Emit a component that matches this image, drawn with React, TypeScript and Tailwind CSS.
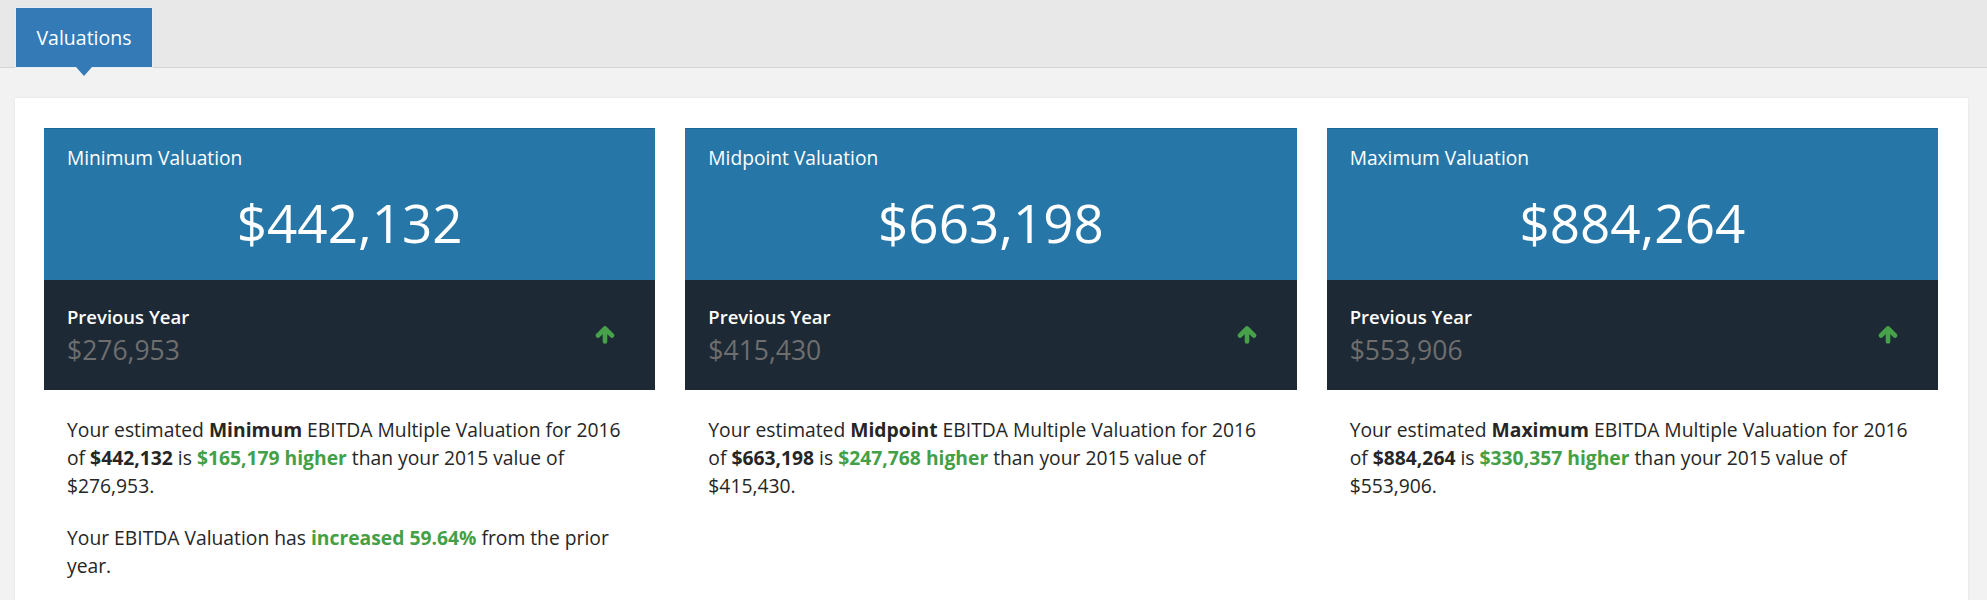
const cards = [
  {
    label: 'Minimum Valuation',
    word: 'Minimum',
    value: '$442,132',
    previous: '$276,953',
    diff: '$165,179',
    note: '59.64%',
  },
  {
    label: 'Midpoint Valuation',
    word: 'Midpoint',
    value: '$663,198',
    previous: '$415,430',
    diff: '$247,768',
  },
  {
    label: 'Maximum Valuation',
    word: 'Maximum',
    value: '$884,264',
    previous: '$553,906',
    diff: '$330,357',
  },
];

const ArrowUp = () => (
  <svg width="20" height="18" viewBox="0 0 20 18" fill="none" stroke="#47a14a" strokeWidth="4.6" strokeLinecap="round" strokeLinejoin="round">
    <path d="M3 9.5 10 2.5l7 7" />
    <path d="M10 3v12.5" />
  </svg>
);

type Card = (typeof cards)[number];

const ValuationCard = ({ card }: { card: Card }) => (
  <div>
    {/* Current year */}
    <div className="h-[152px] bg-[#2676a7] border-t border-[#1b6699] pt-[16px] text-white">
      <div className="pl-[23px] text-[19.2px] leading-[26px]">{card.label}</div>
      <div className="mt-[26px] text-center text-[53px] leading-[52px]">{card.value}</div>
    </div>

    {/* Previous year */}
    <div className="h-[110px] bg-[#1d2935] flex items-center justify-between pl-[23px] pr-[40px]">
      <div>
        <div className="text-[18.5px] leading-[24px] font-semibold text-white">Previous Year</div>
        <div className="mt-[5px] text-[26.5px] leading-[32px] text-[#6e6e6e]">{card.previous}</div>
      </div>
      <ArrowUp />
    </div>

    <div className="pl-[23px] pr-[20px] pt-[26px] text-[19.3px] leading-[28px] text-[#262626]">
      <p>
        Your estimated <b className="font-bold">{card.word}</b> EBITDA Multiple Valuation for 2016 of{' '}
        <b className="font-bold">{card.value}</b> is{' '}
        <span className="font-bold text-[#43a047]">{card.diff} higher</span> than your 2015 value of{' '}
        {card.previous}.
      </p>
      {card.note && (
        <p className="mt-[24px]">
          Your EBITDA Valuation has <span className="font-bold text-[#43a047]">increased {card.note}</span> from
          the prior year.
        </p>
      )}
    </div>
  </div>
);

export default function App() {
  return (
    <div className="h-[600px] overflow-hidden bg-[#f2f2f2] font-['Open_Sans',sans-serif]">
      {/* Tabs */}
      <div className="h-[68px] bg-[#e8e8e8] border-b border-[#d4d4d4] flex items-end px-[15px]">
        <div className="relative -mb-px w-[138px] h-[61px] bg-[#337ab7] border border-[#e6edf4] text-white text-[19.5px] flex items-center justify-center">
          Valuations
          <span className="absolute left-1/2 top-full -translate-x-1/2 border-x-[8px] border-x-transparent border-t-[9px] border-t-[#337ab7]" />
        </div>
      </div>

      {/* Panel */}
      <div className="ml-[15px] mr-[19px] mt-[30px] bg-white shadow-[0_0_2px_rgba(0,0,0,0.08)] pt-[30px] pl-[29px] pr-[30px] h-[560px]">
        <div className="grid grid-cols-3 gap-[30px]">
          {cards.map((card) => (
            <ValuationCard key={card.label} card={card} />
          ))}
        </div>
      </div>
    </div>
  );
}
